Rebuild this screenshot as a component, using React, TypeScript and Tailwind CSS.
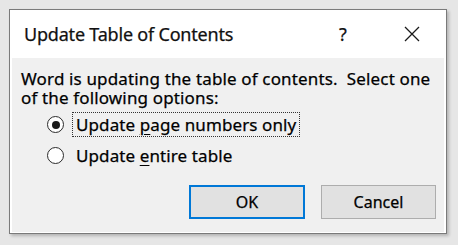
import React from "react";

function Radio({ checked }: { checked: boolean }) {
  return (
    <span className="w-[17px] h-[17px] rounded-full border-[1.8px] border-[#2b2b2b] bg-white flex items-center justify-center shrink-0">
      {checked && <span className="w-[8px] h-[8px] rounded-full bg-[#1a1a1a]" />}
    </span>
  );
}

export default function App() {
  return (
    <div
      className="w-[458px] h-[245px] bg-[#e6e6e6] pl-[9px] pt-[9px] text-black [-webkit-text-stroke:0.25px]"
      style={{ fontFamily: '"Noto Sans", "Open Sans", sans-serif' }}
    >
      <div className="w-[438px] h-[225px] border border-[#7a7a7a] bg-white flex flex-col shadow-[2px_2px_3px_rgba(0,0,0,0.22)]">
        <div className="h-[48px] shrink-0 flex items-center pl-[14px]">
          <span className="text-[18px] leading-none tracking-[-0.2px] text-[#111]">Update Table of Contents</span>
          <span className="ml-auto text-[18px] leading-none w-[20px] text-center text-[#111]">?</span>
          <span className="w-[16px] h-[16px] ml-[51px] mr-[26px]">
            <svg width="16" height="16" viewBox="0 0 16 16">
              <path d="M1 1 L15 15 M15 1 L1 15" stroke="#1a1a1a" strokeWidth="1.3" fill="none" />
            </svg>
          </span>
        </div>
        <div className="flex-1 bg-[#f0f0f0] mx-[2px] mb-[1px] pl-[9px] pr-[8px] pt-[11px] flex flex-col">
          <div className="text-[17px] leading-[19px] whitespace-pre tracking-[0.15px]">
            {"Word is updating the table of contents.  Select one\nof the following options:"}
          </div>
          <div className="mt-[2px] flex flex-col pl-[26px]">
            <div className="h-[31px] flex items-center">
              <Radio checked />
              <span className="ml-[8px] h-[25px] px-[3px] flex items-center border border-dotted border-[#333]">
                <span className="text-[17px] leading-none tracking-[0.1px]">
                  Update <u className="underline-offset-[3px] decoration-1">p</u>age numbers only
                </span>
              </span>
            </div>
            <div className="h-[31px] flex items-center">
              <Radio checked={false} />
              <span className="ml-[8px] h-[25px] px-[4px] flex items-center">
                <span className="text-[17px] leading-none tracking-[0.1px]">
                  Update <u className="underline-offset-[3px] decoration-1">e</u>ntire table
                </span>
              </span>
            </div>
          </div>
          <div className="mt-[14px] flex justify-end gap-[16px]">
            <div className="w-[116px] h-[34px] border-2 border-[#0078d7] bg-[#e1e1e1] flex items-center justify-center text-[16px]">
              OK
            </div>
            <div className="w-[115px] h-[34px] border border-[#adadad] bg-[#e1e1e1] flex items-center justify-center text-[16px]">
              Cancel
            </div>
          </div>
        </div>
      </div>
    </div>
  );
}
